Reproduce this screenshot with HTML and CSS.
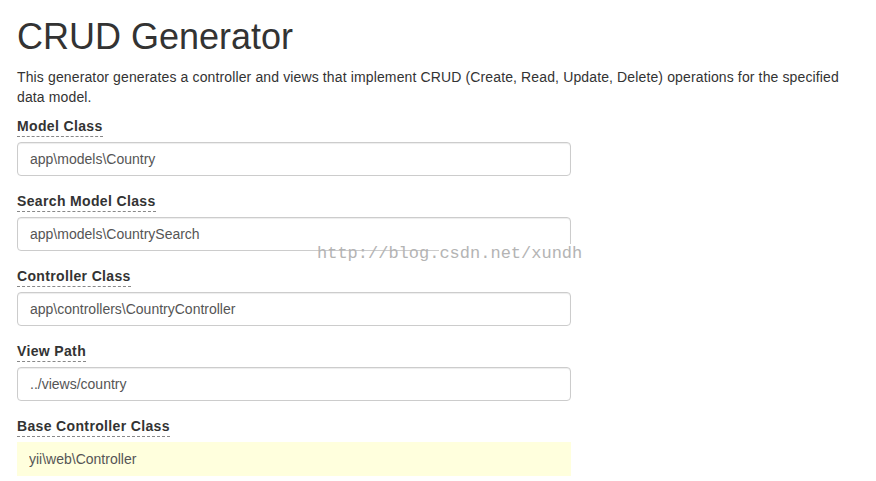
FILE: index.html
```html
<!DOCTYPE html>
<html>
<head>
<meta charset="utf-8">
<link rel="stylesheet" href="styles.css">
</head>
<body>
<div class="page">
  <h1 class="title">CRUD Generator</h1>
  <p class="intro">This generator generates a controller and views that implement CRUD (Create, Read, Update, Delete) operations for the specified data model.</p>
  <form class="gen-form">
    <div class="form-group">
      <label class="help">Model Class</label>
      <input class="form-control" type="text" value="app\models\Country">
    </div>
    <div class="form-group watermarked">
      <label class="help">Search Model Class</label>
      <input class="form-control" type="text" value="app\models\CountrySearch">
      <span class="watermark">http://blog.<span class="wm-cover">csdn.net/xundh</span></span>
    </div>
    <div class="form-group">
      <label class="help">Controller Class</label>
      <input class="form-control" type="text" value="app\controllers\CountryController">
    </div>
    <div class="form-group">
      <label class="help">View Path</label>
      <input class="form-control" type="text" value="../views/country">
    </div>
    <div class="form-group">
      <label class="help">Base Controller Class</label>
      <input class="form-control sticky" type="text" value="yii\web\Controller">
    </div>
  </form>
</div>
</body>
</html>
```

FILE: styles.css
```css
html, body {
  margin: 0;
  padding: 0;
  background: #fff;
}
body {
  font-family: "Liberation Sans", Arial, sans-serif;
  font-size: 14px;
  line-height: 20px;
  color: #333;
}
.page {
  padding: 17px 0 0 17px;
  width: 830px;
}
.title {
  margin: 0 0 10px;
  font-size: 36px;
  font-weight: 400;
  line-height: 1.1;
  color: #333;
}
.intro {
  margin: 0 0 9px;
  letter-spacing: 0.13px;
}
.gen-form {
  width: 554px;
}
.form-group {
  margin-bottom: 15px;
  position: relative;
}
.help {
  display: inline-block;
  font-weight: bold;
  letter-spacing: 0.35px;
  border-bottom: 1px dashed #888;
  margin-bottom: 5px;
  line-height: 20px;
}
.form-control {
  display: block;
  box-sizing: border-box;
  width: 100%;
  height: 34px;
  padding: 6px 12px;
  font-family: "Liberation Sans", Arial, sans-serif;
  font-size: 14px;
  color: #555;
  background: #fff;
  border: 1px solid #ccc;
  border-radius: 4px;
  box-shadow: inset 0 1px 1px rgba(0,0,0,0.075);
  outline: none;
}
.form-control.sticky {
  background: #ffffdd;
  border-color: #ffffdd;
  box-shadow: none;
  border-radius: 0;
  padding-left: 11px;
}
.watermark {
  position: absolute;
  left: 300px;
  top: 53px;
  font-family: "Liberation Mono", "Courier New", monospace;
  font-size: 17px;
  line-height: 20px;
  color: #b4b4b4;
  white-space: nowrap;
}
.wm-cover {
  background: #fff;
}
```
